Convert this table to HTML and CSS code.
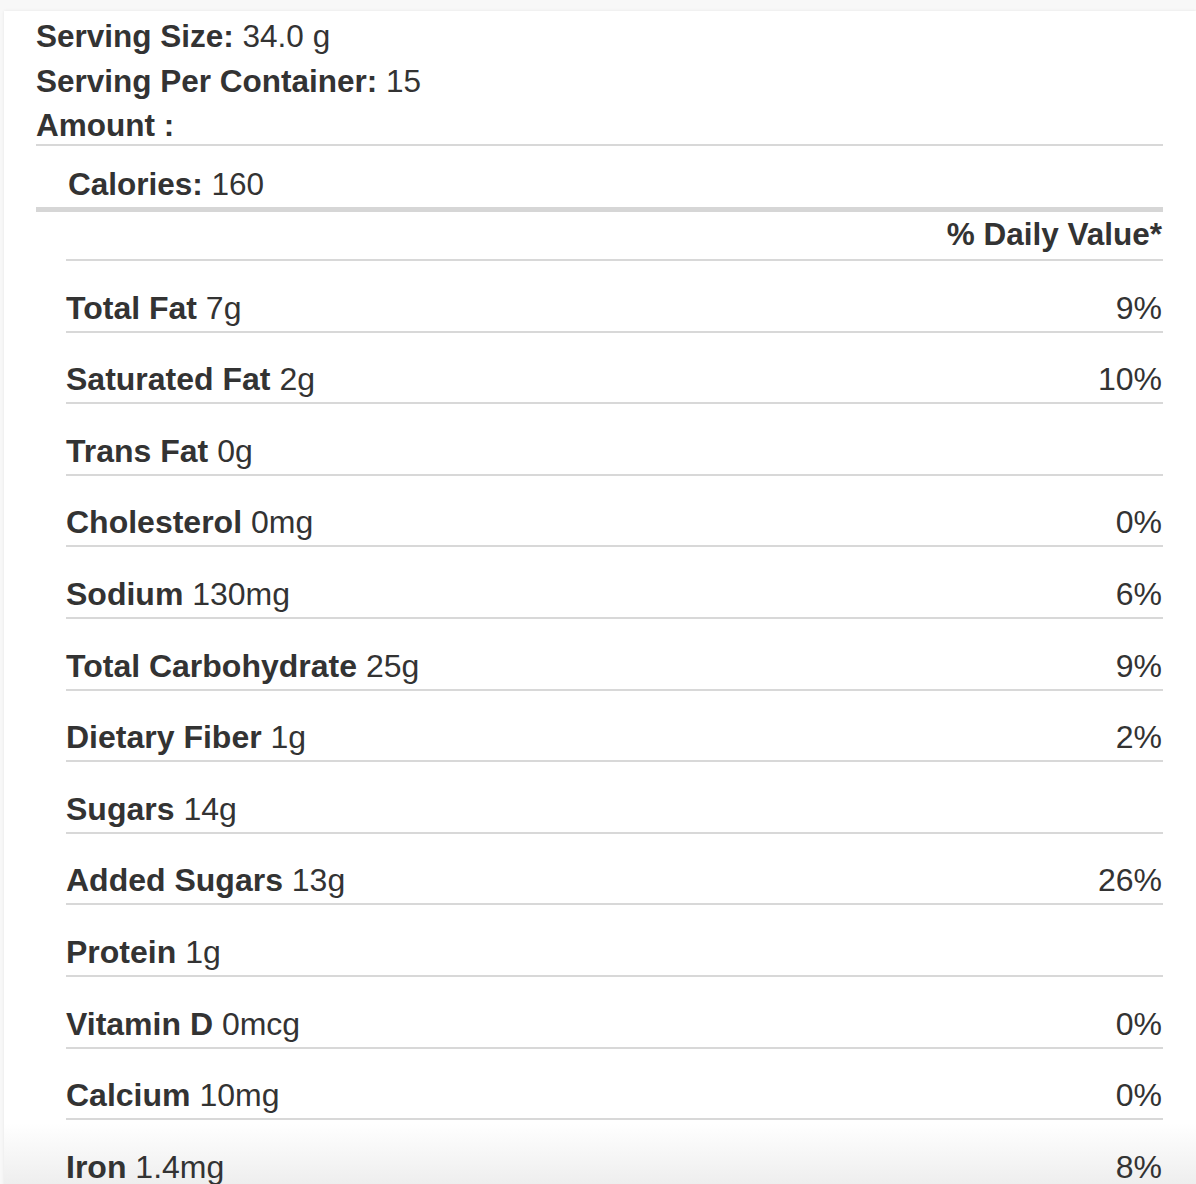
FILE: index.html
```html
<!DOCTYPE html>
<html lang="en">
<head>
<meta charset="utf-8">
<title>Nutrition Facts</title>
<link rel="stylesheet" href="styles.css">
</head>
<body>
<div class="card">
  <div class="serving">
    <p><b>Serving Size:</b> 34.0 g</p>
    <p><b>Serving Per Container:</b> 15</p>
    <p><b>Amount :</b></p>
  </div>
  <div class="calories"><b>Calories:</b> 160</div>
  <div class="facts">
    <div class="dv-head"><b>% Daily Value*</b></div>
    <div class="row"><span><b>Total Fat</b> 7g</span><span>9%</span></div>
    <div class="row"><span><b>Saturated Fat</b> 2g</span><span>10%</span></div>
    <div class="row"><span><b>Trans Fat</b> 0g</span><span></span></div>
    <div class="row"><span><b>Cholesterol</b> 0mg</span><span>0%</span></div>
    <div class="row"><span><b>Sodium</b> 130mg</span><span>6%</span></div>
    <div class="row"><span><b>Total Carbohydrate</b> 25g</span><span>9%</span></div>
    <div class="row"><span><b>Dietary Fiber</b> 1g</span><span>2%</span></div>
    <div class="row"><span><b>Sugars</b> 14g</span><span></span></div>
    <div class="row"><span><b>Added Sugars</b> 13g</span><span>26%</span></div>
    <div class="row"><span><b>Protein</b> 1g</span><span></span></div>
    <div class="row"><span><b>Vitamin D</b> 0mcg</span><span>0%</span></div>
    <div class="row"><span><b>Calcium</b> 10mg</span><span>0%</span></div>
    <div class="row"><span><b>Iron</b> 1.4mg</span><span>8%</span></div>
  </div>
</div>
</body>
</html>
```

FILE: styles.css
```css
html, body {
  margin: 0;
  padding: 0;
  background: #f8f8f8;
}
body {
  font-family: "Liberation Sans", Arial, Helvetica, sans-serif;
  font-size: 31.5px;
  color: #333;
  overflow: hidden;
  height: 1184px;
}
b { font-weight: bold; }
.card {
  margin: 11px 0 0 4px;
  padding: 0 33px 40px 32px;
  background: linear-gradient(to bottom, #fff 0, #fff 1112px, #ececec 1180px) no-repeat;
  background-color: #ececec;
  box-shadow: 0 0 3px rgba(0, 0, 0, 0.08);
}
.serving {
  padding: 7px 0 1px;
  border-bottom: 2px solid #d8d8d8;
}
.serving p {
  margin: 0 0 8.5px;
  line-height: 36px;
}
.serving p:last-child { margin-bottom: 0; }
.calories {
  padding: 20px 0 5px 32px;
  line-height: 36px;
  border-bottom: 5px solid #d6d6d6;
}
.facts {
  margin-left: 30px;
  font-size: 32px;
}
.dv-head {
  text-align: right;
  font-size: 31.5px;
  padding: 4px 1px 7px 0;
  line-height: 36px;
  border-bottom: 2px solid #d8d8d8;
}
.row {
  display: flex;
  justify-content: space-between;
  padding: 28.6px 1px 5px 0;
  line-height: 36px;
  border-bottom: 2px solid #d8d8d8;
}
```
